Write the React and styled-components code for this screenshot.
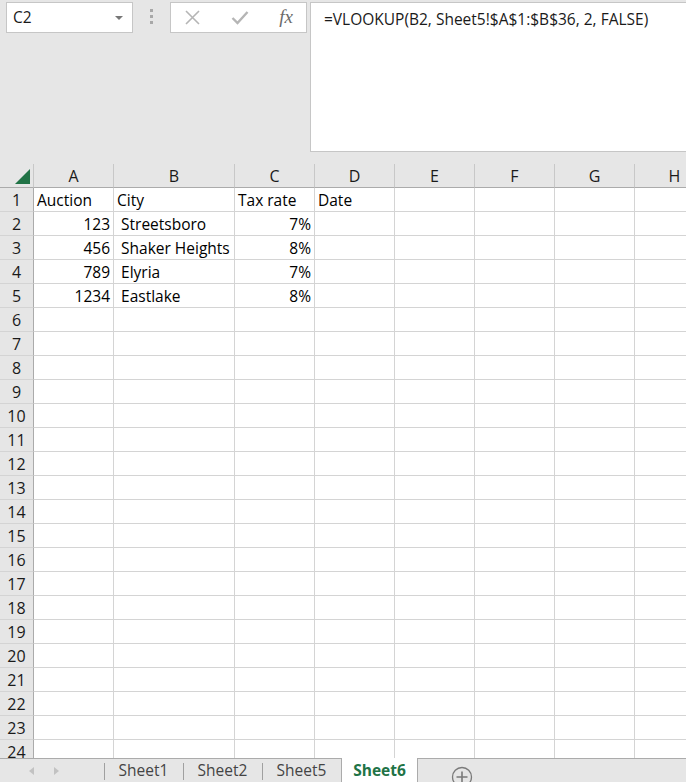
import React from "react";
import styled, { createGlobalStyle } from "styled-components";

const Global = createGlobalStyle`
  body {
    margin: 0;
    overflow: hidden;
    font-family: "Open Sans", "Noto Sans", sans-serif;
  }
  * { box-sizing: border-box; }
`;

const Window = styled.div`
  width: 686px;
  height: 782px;
  background: #e6e6e6;
  display: flex;
  flex-direction: column;
  overflow: hidden;
`;

const TopBar = styled.div`
  height: 164px;
  display: flex;
  align-items: flex-start;
  padding: 2px 0 0 6px;
  flex-shrink: 0;
`;

const NameBox = styled.div`
  width: 127px;
  height: 31px;
  background: #fff;
  border: 1px solid #c6c6c6;
  display: flex;
  align-items: center;
  justify-content: space-between;
  padding: 0 9px 1px 6px;
  font-size: 15.5px;
  color: #1a1a1a;
`;

const Arrow = styled.span`
  width: 0;
  height: 0;
  border-left: 4px solid transparent;
  border-right: 4px solid transparent;
  border-top: 4px solid #777;
  margin-top: 1px;
`;

const Grip = styled.div`
  width: 37px;
  height: 31px;
  display: flex;
  flex-direction: column;
  align-items: center;
  justify-content: center;
  gap: 3px;
  padding-bottom: 2px;
`;

const GripDot = styled.span`
  width: 3px;
  height: 3px;
  background: #a8a8a8;
`;

const FxButtons = styled.div`
  width: 137px;
  height: 31px;
  background: #fff;
  border: 1px solid #c6c6c6;
  display: flex;
  align-items: center;
  justify-content: space-between;
  padding: 0 13px 0 13px;
`;

const FxLabel = styled.span`
  font-family: "Liberation Serif", serif;
  font-style: italic;
  font-size: 19px;
  color: #6b6b6b;
  margin-top: -2px;
`;

const FormulaBox = styled.div`
  flex: 1;
  margin-left: 3px;
  height: 150px;
  background: #fff;
  border: 1px solid #c6c6c6;
  border-right: none;
  padding: 5px 0 0 13px;
  font-size: 15.5px;
  color: #1a1a1a;
  white-space: pre;
`;

const SheetArea = styled.div`
  height: 594px;
  overflow: hidden;
  flex-shrink: 0;
  background: #fff;
`;

const Grid = styled.div`
  display: grid;
  grid-template-columns: 34px 80px 121px 80px 80px 80px 80px 80px 80px;
  grid-auto-rows: 24px;
  width: 715px;
`;

const Corner = styled.div`
  background: #e6e6e6;
  border-right: 1px solid #c8c8c8;
  border-bottom: 1px solid #ababab;
  display: flex;
  align-items: flex-end;
  justify-content: flex-end;
  padding: 0 3px 3px 0;
`;

const ColHead = styled.div`
  background: #e6e6e6;
  border-right: 1px solid #c8c8c8;
  border-bottom: 1px solid #ababab;
  display: flex;
  align-items: center;
  justify-content: center;
  font-size: 16px;
  color: #1a1a1a;
  padding-top: 1px;
`;

const RowHead = styled.div`
  background: #e6e6e6;
  border-right: 1px solid #ababab;
  border-bottom: 1px solid #d4d4d4;
  display: flex;
  align-items: center;
  justify-content: center;
  font-size: 16px;
  color: #1a1a1a;
  padding-top: 1px;
`;

const Cell = styled.div`
  border-right: 1px solid #d4d4d4;
  border-bottom: 1px solid #d4d4d4;
  display: flex;
  align-items: center;
  justify-content: ${(p) => (p.$right ? "flex-end" : "flex-start")};
  padding: 1px 3px 0 3px;
  font-size: 15.5px;
  color: #000;
  white-space: pre;
`;

const TabBar = styled.div`
  height: 24px;
  border-top: 1px solid #ababab;
  display: flex;
  align-items: stretch;
  flex-shrink: 0;
`;

const Nav = styled.div`
  width: 104px;
  display: flex;
  align-items: center;
  padding-left: 29px;
  gap: 20px;
`;

const NavArrow = styled.span`
  width: 0;
  height: 0;
  border-top: 4px solid transparent;
  border-bottom: 4px solid transparent;
  ${(p) =>
    p.$dir === "left"
      ? "border-right: 5px solid #c2c2c2;"
      : "border-left: 5px solid #c2c2c2;"}
`;

const Tab = styled.div`
  width: ${(p) => (p.$active ? "77px" : "79px")};
  display: flex;
  align-items: center;
  justify-content: center;
  font-size: 15.5px;
  padding-bottom: 1px;
  position: relative;
  ${(p) =>
    p.$active
      ? `
    background: #fff;
    color: #217346;
    font-weight: 700;
    margin-top: -1px;
    border-left: 1px solid #ababab;
    border-right: 1px solid #ababab;
  `
      : `
    color: #444;
    &::before {
      content: "";
      position: absolute;
      left: 0;
      top: 4px;
      bottom: 2px;
      border-left: 1px solid #a0a0a0;
    }
  `}
`;

const AddSheet = styled.div`
  margin-left: 33px;
  display: flex;
  align-items: flex-start;
  padding-top: 7px;
`;

const columns = ["A", "B", "C", "D", "E", "F", "G", "H"];

const data = [
  [{ v: "Auction" }, { v: "City" }, { v: "Tax rate" }, { v: "Date" }],
  [{ v: "123", r: true }, { v: " Streetsboro" }, { v: "7%", r: true }],
  [{ v: "456", r: true }, { v: " Shaker Heights" }, { v: "8%", r: true }],
  [{ v: "789", r: true }, { v: " Elyria" }, { v: "7%", r: true }],
  [{ v: "1234", r: true }, { v: " Eastlake" }, { v: "8%", r: true }],
];

export default function App() {
  const rows = Array.from({ length: 24 }, (_, i) => i + 1);
  return (
    <Window>
      <Global />
      <TopBar>
        <NameBox>
          <span>C2</span>
          <Arrow />
        </NameBox>
        <Grip>
          <GripDot />
          <GripDot />
          <GripDot />
        </Grip>
        <FxButtons>
          <svg width="17" height="17" viewBox="0 0 17 17">
            <path d="M2 2 L15 15 M15 2 L2 15" stroke="#b5b5b5" strokeWidth="1.6" fill="none" />
          </svg>
          <svg width="18" height="15" viewBox="0 0 18 15">
            <path d="M1.5 8 L6.5 13 L16.5 2" stroke="#b5b5b5" strokeWidth="2.4" fill="none" />
          </svg>
          <FxLabel>fx</FxLabel>
        </FxButtons>
        <FormulaBox>=VLOOKUP(B2, Sheet5!$A$1:$B$36, 2, FALSE)</FormulaBox>
      </TopBar>

      <SheetArea>
        <Grid>
          <Corner>
            <svg width="15" height="15" viewBox="0 0 15 15">
              <polygon points="15,0 15,15 0,15" fill="#217346" />
            </svg>
          </Corner>
          {columns.map((c) => (
            <ColHead key={c}>{c}</ColHead>
          ))}
          {rows.map((r) => (
            <React.Fragment key={r}>
              <RowHead>{r}</RowHead>
              {columns.map((c, ci) => {
                const cell = data[r - 1] && data[r - 1][ci];
                return (
                  <Cell key={c} $right={cell && cell.r}>
                    {cell ? cell.v : ""}
                  </Cell>
                );
              })}
            </React.Fragment>
          ))}
        </Grid>
      </SheetArea>

      <TabBar>
        <Nav>
          <NavArrow $dir="left" />
          <NavArrow $dir="right" />
        </Nav>
        <Tab>Sheet1</Tab>
        <Tab>Sheet2</Tab>
        <Tab>Sheet5</Tab>
        <Tab $active>Sheet6</Tab>
        <AddSheet>
          <svg width="22" height="22" viewBox="0 0 22 22">
            <circle cx="11" cy="11" r="9.5" fill="none" stroke="#7a7a7a" strokeWidth="1.3" />
            <path d="M11 5.5 V16.5 M5.5 11 H16.5" stroke="#7a7a7a" strokeWidth="1.6" />
          </svg>
        </AddSheet>
      </TabBar>
    </Window>
  );
}
